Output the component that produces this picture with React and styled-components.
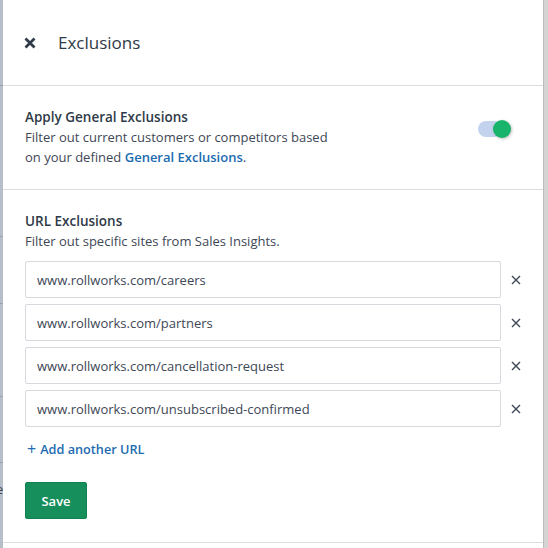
import React from "react";
import styled, { createGlobalStyle } from "styled-components";

const colors = {
  heading: "#2f3a48",
  text: "#3e4756",
  link: "#1c6bb0",
  rule: "#dcdde0",
  green: "#168f5c",
};

const urls = [
  "www.rollworks.com/careers",
  "www.rollworks.com/partners",
  "www.rollworks.com/cancellation-request",
  "www.rollworks.com/unsubscribed-confirmed",
];

const App = () => {
  return (
    <>
      <GlobalStyle />
      <Page>
        <Backdrop>
          <BackdropRule $top={85} />
          <BackdropRule $top={150} />
          <BackdropRule $top={66} />
          <BackdropRule $top={92} />
          <BackdropRule $top={65} />
          <BackdropGlyph>e</BackdropGlyph>
        </Backdrop>

        <Panel>
          <Header>
            <CloseIcon viewBox="0 0 12 12">
              <path d="M1.5 1.5 L10.5 10.5 M10.5 1.5 L1.5 10.5" />
            </CloseIcon>
            <Title>Exclusions</Title>
          </Header>

          <GeneralSection>
            <div>
              <SectionTitle>Apply General Exclusions</SectionTitle>
              <Description $narrow>
                Filter out current customers or competitors based on your defined{" "}
                <Link href="#">General Exclusions</Link>.
              </Description>
            </div>
            <Toggle>
              <Toggle.Track />
              <Toggle.Knob />
            </Toggle>
          </GeneralSection>

          <UrlSection>
            <SectionTitle>URL Exclusions</SectionTitle>
            <Description>Filter out specific sites from Sales Insights.</Description>
            <UrlList>
              {urls.map((url) => (
                <UrlRow key={url}>
                  <UrlInput value={url} readOnly />
                  <RemoveButton aria-label="Remove URL">
                    <svg viewBox="0 0 10 10">
                      <path d="M1 1 L9 9 M9 1 L1 9" />
                    </svg>
                  </RemoveButton>
                </UrlRow>
              ))}
            </UrlList>
            <AddLink href="#">
              <span>+</span>Add another URL
            </AddLink>
            <SaveButton>Save</SaveButton>
          </UrlSection>
        </Panel>

        <ScrollTrack />
      </Page>
    </>
  );
};

export default App;

const GlobalStyle = createGlobalStyle`
  html, body {
    margin: 0;
    padding: 0;
    width: 548px;
    height: 548px;
    overflow: hidden;
    font-family: "Open Sans", "Noto Sans", sans-serif;
  }
`;

const Page = styled.div`
  display: flex;
  width: 548px;
  height: 548px;
`;

const Backdrop = styled.div`
  width: 3px;
  display: flex;
  flex-direction: column;
  background: #b6bec9;
  overflow: hidden;
`;

const BackdropRule = styled.div`
  margin-top: ${(p) => p.$top}px;
  height: 1px;
  flex-shrink: 0;
  background: #98a1ad;
`;

const BackdropGlyph = styled.div`
  margin-top: 16px;
  margin-left: -4px;
  font-size: 13px;
  line-height: 20px;
  color: #3e4756;
`;

const Panel = styled.div`
  width: 540px;
  display: flex;
  flex-direction: column;
  background: #fff;
`;

const ScrollTrack = styled.div`
  flex: 1;
  background: #d4d4d4;
  border-left: 1px solid #bdbdbd;
`;

const Header = styled.header`
  height: 85px;
  display: flex;
  align-items: center;
  gap: 22px;
  padding-left: 21px;
  border-bottom: 1px solid ${colors.rule};
`;

const CloseIcon = styled.svg`
  width: 12px;
  height: 12px;
  fill: none;
  stroke: ${colors.heading};
  stroke-width: 2.7;
`;

const Title = styled.h1`
  margin: 0;
  font-size: 17px;
  font-weight: 400;
  color: ${colors.heading};
`;

const GeneralSection = styled.section`
  display: flex;
  justify-content: space-between;
  align-items: flex-start;
  padding: 21px 32px 22px 22px;
  border-bottom: 1px solid ${colors.rule};
`;

const UrlSection = styled.section`
  display: flex;
  flex-direction: column;
  align-items: flex-start;
  padding: 21px 22px 23px 22px;
  border-bottom: 1px solid ${colors.rule};
`;

const SectionTitle = styled.h2`
  margin: 0;
  font-size: 13.5px;
  line-height: 20px;
  font-weight: 600;
  color: ${colors.heading};
`;

const Description = styled.p`
  margin: 0;
  max-width: ${(p) => (p.$narrow ? "315px" : "none")};
  font-size: 13px;
  line-height: 20px;
  color: ${colors.text};
`;

const Link = styled.a`
  color: ${colors.link};
  font-weight: 600;
  text-decoration: none;
`;

const Toggle = styled.div`
  position: relative;
  width: 33px;
  height: 18px;
  margin-top: 13px;
`;

Toggle.Track = styled.div`
  position: absolute;
  left: 0;
  top: 1px;
  width: 24px;
  height: 16px;
  border-radius: 8px;
  background: #c3d3ee;
`;

Toggle.Knob = styled.div`
  position: absolute;
  right: 0;
  top: 0;
  width: 18px;
  height: 18px;
  border-radius: 50%;
  background: #19b46b;
  box-shadow: 1px 1px 3px rgba(0, 0, 0, 0.25);
`;

const UrlList = styled.div`
  align-self: stretch;
  display: flex;
  flex-direction: column;
  gap: 6px;
  margin-top: 10px;
`;

const UrlRow = styled.div`
  display: flex;
  align-items: center;
  gap: 10px;
`;

const UrlInput = styled.input`
  flex: 1;
  height: 37px;
  box-sizing: border-box;
  padding: 0 11px;
  border: 1px solid #d6d9dd;
  border-radius: 2px;
  font-family: inherit;
  font-size: 13px;
  color: ${colors.text};
  outline: none;
`;

const RemoveButton = styled.button`
  width: 10px;
  height: 10px;
  padding: 0;
  border: 0;
  background: none;
  display: flex;

  svg {
    width: 10px;
    height: 10px;
    fill: none;
    stroke: ${colors.text};
    stroke-width: 1.4;
  }
`;

const AddLink = styled.a`
  display: flex;
  align-items: center;
  gap: 4px;
  margin-top: 12px;
  margin-left: 2px;
  font-size: 12.7px;
  line-height: 20px;
  font-weight: 600;
  color: ${colors.link};
  text-decoration: none;

  span {
    font-weight: 400;
    font-size: 16px;
  }
`;

const SaveButton = styled.button`
  margin-top: 23px;
  width: 62px;
  height: 37px;
  border: 1px solid #12804f;
  border-radius: 2px;
  background: ${colors.green};
  color: #fff;
  font-family: inherit;
  font-size: 13px;
  font-weight: 600;
`;
